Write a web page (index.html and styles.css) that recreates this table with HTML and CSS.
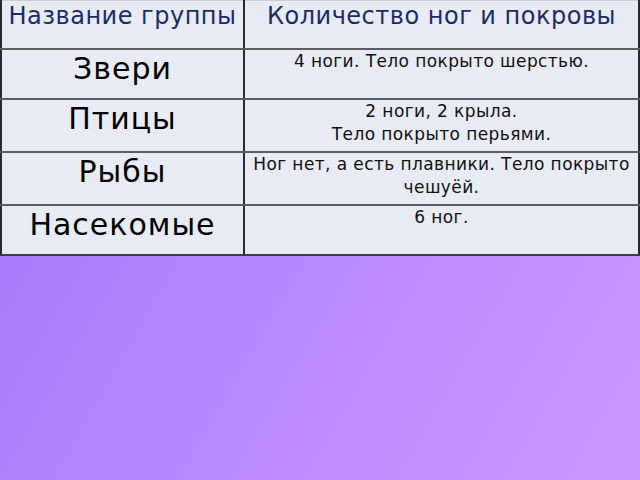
FILE: index.html
```html
<!DOCTYPE html>
<html lang="ru">
<head>
<meta charset="utf-8">
<link rel="stylesheet" href="styles.css">
</head>
<body>
<div class="slide">
  <table class="animals">
    <tr class="head">
      <th class="name-col">Название группы</th>
      <th class="desc-col">Количество ног и покровы</th>
    </tr>
    <tr class="r1">
      <td class="name">Звери</td>
      <td class="desc">4 ноги. Тело покрыто шерстью.</td>
    </tr>
    <tr class="r2">
      <td class="name">Птицы</td>
      <td class="desc">2 ноги, 2 крыла.<br>Тело покрыто перьями.</td>
    </tr>
    <tr class="r3">
      <td class="name">Рыбы</td>
      <td class="desc">Ног нет, а есть плавники. Тело покрыто чешуёй.</td>
    </tr>
    <tr class="r4">
      <td class="name">Насекомые</td>
      <td class="desc">6 ног.</td>
    </tr>
  </table>
</div>
</body>
</html>
```

FILE: styles.css
```css
html, body {
  margin: 0;
  padding: 0;
}
body {
  width: 640px;
  height: 480px;
  overflow: hidden;
}
.slide {
  width: 640px;
  height: 480px;
  background: linear-gradient(120deg, #a374fe 0%, #b586fe 45%, #cb98fe 100%);
  font-family: "DejaVu Sans", sans-serif;
}
.animals {
  border-collapse: collapse;
  width: 640px;
  table-layout: fixed;
  background: #e8ebf3;
}
.animals th, .animals td {
  vertical-align: top;
  text-align: center;
  padding: 0 4px;
  border-left: 2px solid #2a2a2e;
  border-right: 2px solid #2a2a2e;
  border-top: 2px solid #5c5d63;
  border-bottom: 2px solid #5c5d63;
}
.animals .head th {
  border-top: 1px solid #c9ccd4;
  font-weight: normal;
  color: #1c2b66;
  font-size: 24px;
  letter-spacing: 0.5px;
  line-height: 28px;
  height: 46px;
  padding-top: 1px;
}
.name-col { width: 233px; }
.animals .name {
  color: #000;
  font-size: 30px;
  letter-spacing: 1px;
  line-height: 34px;
  padding-top: 2px;
}
.desc {
  color: #111;
  font-size: 17px;
  letter-spacing: 0.4px;
  line-height: 23px;
}
.r1 td { height: 48px; }
.r2 td { height: 51px; }
.r3 td { height: 51px; }
.r4 td { height: 48px; }
.r1 .name, .r4 .name { height: 46px; }
.r2 .name, .r3 .name { height: 49px; }
.r4 td { border-bottom: 2px solid #3c3c42; }
```
